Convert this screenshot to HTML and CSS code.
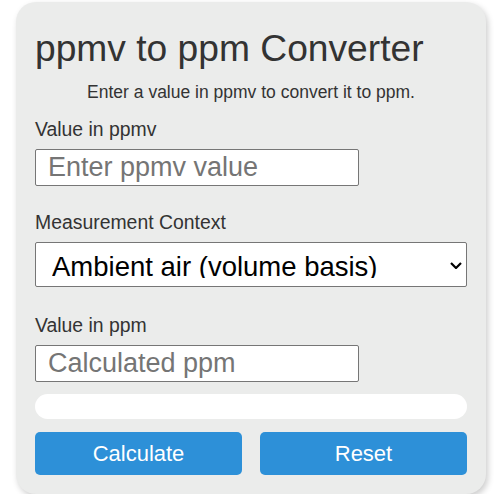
FILE: index.html
```html
<!DOCTYPE html>
<html lang="en">
<head>
 <meta charset="UTF-8">
 <meta name="viewport" content="width=device-width, initial-scale=1.0">
 <title>ppmv to ppm Converter</title>
 <link rel="stylesheet" href="styles.css">
</head>
<body>
 <div class="calculator">
 <h1 class="calc-title">ppmv to ppm Converter</h1>
 <p class="calc-intro">Enter a value in ppmv to convert it to ppm.</p>
 <div class="field">
 <label class="field-label" for="ppmvInput">Value in ppmv</label>
 <input type="number" id="ppmvInput" class="field-input" placeholder="Enter ppmv value">
 </div>
 <div class="field field-wide">
 <label class="field-label" for="context">Measurement Context</label>
 <div class="select-wrap">
 <select id="context" class="field-select">
 <option>Ambient air (volume basis)</option>
 <option>Dry gas (volume basis)</option>
 </select>
 <svg class="select-arrow" viewBox="0 0 12 7" fill="none" stroke="currentColor" stroke-width="2.2">
 <polyline points="1 1 6 6 11 1"></polyline>
 </svg>
 </div>
 </div>
 <div class="field">
 <label class="field-label" for="ppmOutput">Value in ppm</label>
 <input type="text" id="ppmOutput" class="field-input" placeholder="Calculated ppm" readonly>
 </div>
 <div class="result" id="result"></div>
 <div class="actions">
 <button class="button" id="calcButton">Calculate</button>
 <button class="button" id="resetButton">Reset</button>
 </div>
 </div>
 <script>
 const ppmvInput = document.getElementById('ppmvInput');
 const ppmOutput = document.getElementById('ppmOutput');
 const result = document.getElementById('result');
 document.getElementById('calcButton').addEventListener('click', () => {
 const value = parseFloat(ppmvInput.value);
 if (isNaN(value)) {
 result.textContent = 'Please enter a valid number.';
 return;
 }
 ppmOutput.value = value;
 result.textContent = value + ' ppmv = ' + value + ' ppm';
 });
 document.getElementById('resetButton').addEventListener('click', () => {
 ppmvInput.value = '';
 ppmOutput.value = '';
 result.textContent = '';
 });
 </script>
</body>
</html>
```

FILE: styles.css
```css
* {
 box-sizing: border-box;
}
body {
 margin: 0;
 padding: 2px 17px 0 16px;
 background: #fff;
 font-family: "Liberation Sans", Arial, sans-serif;
 color: #333;
}
.calculator {
 width: 470px;
 padding: 19px;
 background: #ebeceb;
 border-radius: 20px;
 box-shadow: 2px 3px 6px rgba(0, 0, 0, 0.2);
}
.calc-title {
 margin: 6px 0 0;
 font-size: 37.2px;
 line-height: 42px;
 font-weight: normal;
 color: #333;
}
.calc-intro {
 margin: 13px 0 0;
 font-size: 17.5px;
 line-height: 20px;
 text-align: center;
}
.field {
 margin-top: 16px;
}
.field-wide {
 margin-top: 25px;
}
.field-wide + .field {
 margin-top: 27px;
}
.field-label {
 display: block;
 margin-bottom: 9px;
 font-size: 19.4px;
 line-height: 22px;
 color: #333;
}
.field-input {
 display: block;
 width: 324px;
 height: 37px;
 padding: 0 12px;
 border: 1px solid #767676;
 border-radius: 2px;
 background: #fff;
 font-family: inherit;
 font-size: 27px;
 color: #000;
}
.field-input::placeholder {
 color: #757575;
}
.select-wrap {
 position: relative;
}
.field-select {
 display: block;
 width: 100%;
 height: 45px;
 padding: 8px 40px 8px 16px;
 border: 1px solid #767676;
 border-radius: 2px;
 background: #fff;
 font-family: inherit;
 font-size: 27.5px;
 color: #000;
 appearance: none;
 -webkit-appearance: none;
}
.select-arrow {
 position: absolute;
 right: 5px;
 top: 20px;
 width: 12px;
 height: 7px;
 color: #000;
 pointer-events: none;
}
.result {
 height: 25px;
 margin-top: 12px;
 border-radius: 13px;
 background: #fff;
 font-size: 16px;
 line-height: 25px;
 padding: 0 12px;
}
.actions {
 display: flex;
 gap: 18px;
 margin-top: 13px;
}
.button {
 flex: 1;
 height: 43px;
 border: none;
 border-radius: 5px;
 background: #2d90d8;
 color: #fff;
 font-family: inherit;
 font-size: 22px;
 cursor: pointer;
}
.button:hover {
 background: #2580c2;
}
```
